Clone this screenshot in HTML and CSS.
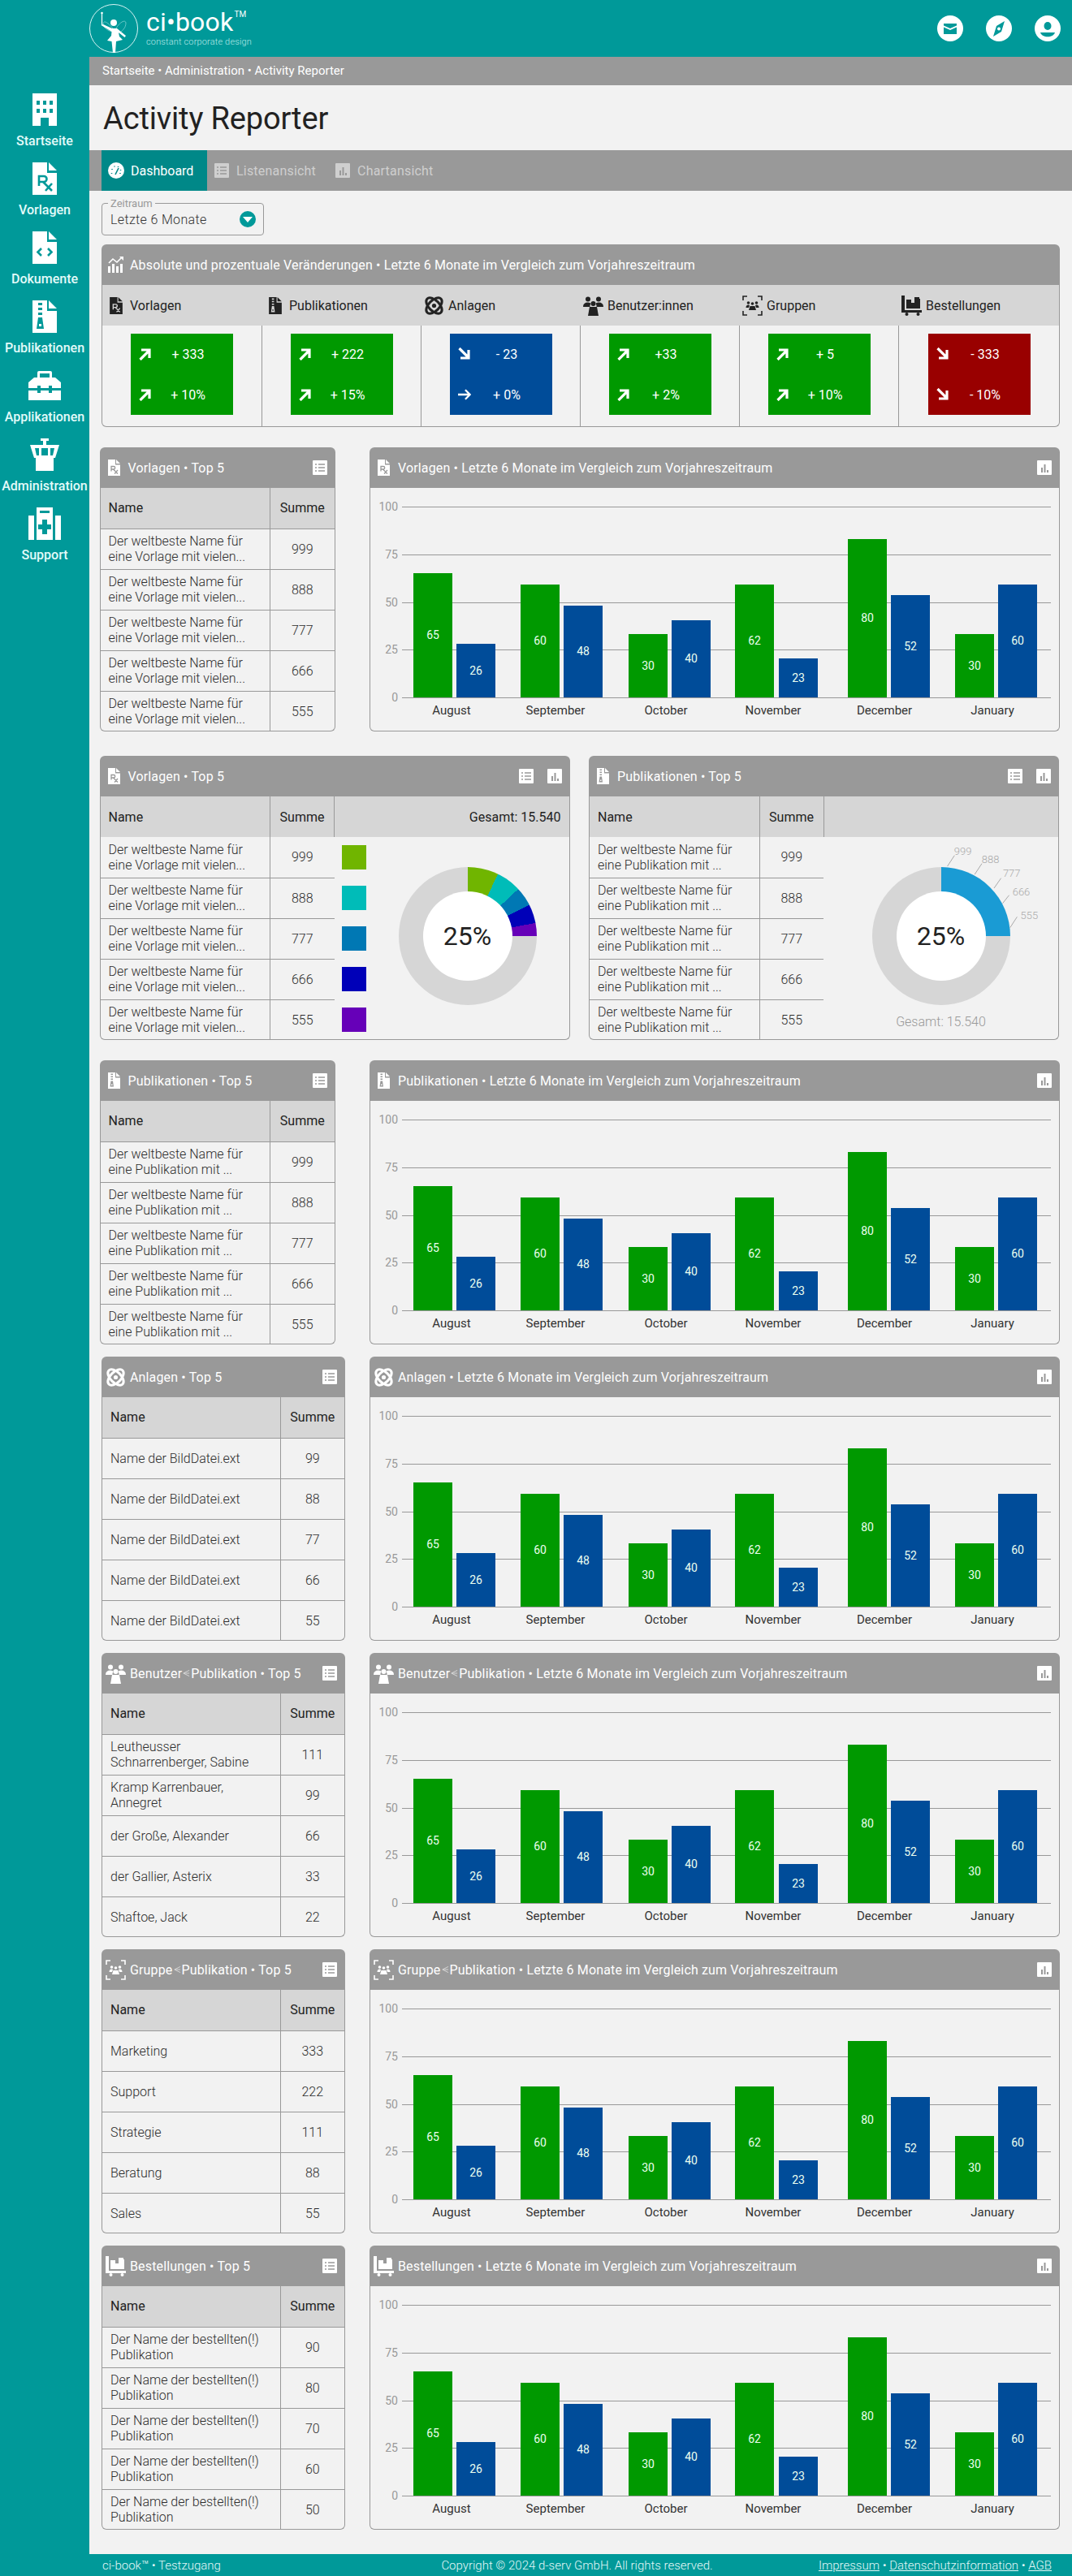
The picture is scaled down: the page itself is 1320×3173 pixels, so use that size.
FILE: index.html
```html
<!DOCTYPE html>
<html lang="de">
<head>
<meta charset="utf-8">
<title>Activity Reporter</title>
<link rel="stylesheet" href="styles.css">
</head>
<body>
<svg class="sprite" aria-hidden="true">
<symbol id="i-building" viewBox="0 0 30 40"><path fill-rule="evenodd" d="M0 0H30V40H20V30H10V40H0ZM5 9V14H9V9ZM13 9V14H17V9ZM21 9V14H25V9ZM5 19V24H9V19ZM13 19V24H17V19ZM21 19V24H25V19Z"/></symbol>
<symbol id="i-rx" viewBox="0 0 30 40"><path d="M0 0H18V13H30V40H0ZM20 0L30 10H20Z"/><path class="hs" stroke-width="2.6" d="M8 29V17H14A3.4 3.4 0 0 1 14 24H8M13 24L24 35M24 26L16 35"/></symbol>
<symbol id="i-code" viewBox="0 0 30 40"><path d="M0 0H18V13H30V40H0ZM20 0L30 10H20Z"/><path class="hs" stroke-width="2.6" d="M11 21L6.5 25.5L11 30M19 21L23.5 25.5L19 30"/></symbol>
<symbol id="i-zip" viewBox="0 0 30 40"><path d="M0 0H18V13H30V40H0ZM20 0L30 10H20Z"/><path class="hf" d="M7 3H12V6H7ZM7 9H12V12H7ZM7 15H12V18H7ZM7 21H12L14 35H5ZM8 29V32H11V29Z"/></symbol>
<symbol id="i-toolbox" viewBox="0 0 40 36"><path fill-rule="evenodd" d="M11 8V2Q11 0 13 0H27Q29 0 29 2V8H33L40 14V21H29V18H25V21H15V18H11V21H0V14L7 8ZM14 3V8H26V3ZM0 24H11V27H15V24H25V27H29V24H40V36H0Z"/></symbol>
<symbol id="i-tower" viewBox="0 0 36 40"><path fill-rule="evenodd" d="M13 0H23V3H20V8H36L31 24H29V40H7V24H5L0 8H16V3H13ZM6 12L8 21H11V12ZM14 12V21H22V12ZM25 12V21H28L30 12Z"/></symbol>
<symbol id="i-support" viewBox="0 0 40 40"><path fill-rule="evenodd" d="M0 10H7V40H0ZM33 10H40V40H33ZM10 0H30V40H10ZM14 4V7H26V4ZM17 15V21H12V27H17V33H23V27H28V21H23V15Z"/></symbol>
<symbol id="i-list" viewBox="0 0 18 18"><rect width="18" height="18" rx="1"/><path class="hs" stroke-width="1.6" d="M3 5H5M7 5H15M3 9H5M7 9H15M3 13H5M7 13H15"/></symbol>
<symbol id="i-bars" viewBox="0 0 18 18"><rect width="18" height="18" rx="1"/><path class="hf" d="M5 9H7V15H5ZM8.5 5H10.5V15H8.5ZM12 12H14V15H12Z"/></symbol>
<symbol id="i-trend" viewBox="0 0 20 20"><path d="M0 12H3V20H0ZM5 9H8V20H5ZM10 12H13V20H10ZM15 9H18V20H15Z"/><path fill="none" stroke="currentColor" stroke-width="1.6" d="M1 8L6 3L11 7L17 1"/><path d="M14 0H19V5Z"/></symbol>
<symbol id="i-atom" viewBox="0 0 25 25"><g fill="none" stroke="currentColor" stroke-width="3"><ellipse cx="12.5" cy="12.5" rx="12" ry="6.5" transform="rotate(45 12.5 12.5)"/><ellipse cx="12.5" cy="12.5" rx="12" ry="6.5" transform="rotate(-45 12.5 12.5)"/></g><circle cx="12.5" cy="12.5" r="2.6"/></symbol>
<symbol id="i-users" viewBox="0 0 25 25"><circle cx="6" cy="4.5" r="3"/><circle cx="19" cy="4.5" r="3"/><path d="M0 14Q0 8.500 6 8.500Q9 8.500 9.500 10Q8 12 8.500 14ZM25 14Q25 8.500 19 8.500Q16 8.500 15.500 10Q17 12 16.500 14Z"/><circle cx="12.500" cy="10" r="3"/><path d="M8 14H17L19 25H6Z"/></symbol>
<symbol id="i-group" viewBox="0 0 25 25"><path fill="none" stroke="currentColor" stroke-width="1.6" d="M6 1H1V6M19 1H24V6M6 24H1V19M19 24H24V19"/><circle cx="7.500" cy="9" r="1.800"/><circle cx="17.500" cy="9" r="1.800"/><circle cx="12.500" cy="10" r="1.800"/><path d="M4.500 15Q4.500 11.500 7.500 11.500L9 12L8 15ZM20.500 15Q20.500 11.500 17.500 11.500L16 12L17 15ZM9.500 13H15.500L17 18H8Z"/></symbol>
<symbol id="i-dolly" viewBox="0 0 25 25"><path d="M0 0H4V18H25V21H0Z"/><circle cx="6.500" cy="23" r="2"/><circle cx="20.500" cy="23" r="2"/><path d="M6 5H12V9H16V2H22V4H23V16H6Z"/></symbol>
<symbol id="i-up" viewBox="0 0 16 16"><path fill="none" stroke="currentColor" stroke-width="3.200" d="M1.500 15L12.500 4M3 3H13V13"/></symbol>
<symbol id="i-down" viewBox="0 0 16 16"><path fill="none" stroke="currentColor" stroke-width="3.200" d="M1.500 1L12.500 12M3 13H13V3"/></symbol>
<symbol id="i-right" viewBox="0 0 18 16"><path fill="none" stroke="currentColor" stroke-width="2.600" d="M0 8H16M10 1.500L16.500 8L10 14.500"/></symbol>
<symbol id="bars" viewBox="0 0 848 299"><g class="grid"><path d="M39 23.500H838M39 82.500H838M39 141.500H838M39 199.500H838M39 258.500H838"/></g><g class="bar-g"><rect x="53" y="105" width="48" height="153"/><rect x="185" y="119" width="48" height="139"/><rect x="318" y="180" width="48" height="78"/><rect x="449" y="119" width="48" height="139"/><rect x="588" y="63" width="48" height="195"/><rect x="720" y="180" width="48" height="78"/></g><g class="bar-b"><rect x="106" y="192" width="48" height="66"/><rect x="238" y="145" width="48" height="113"/><rect x="371" y="163" width="48" height="95"/><rect x="503" y="210" width="48" height="48"/><rect x="641" y="132" width="48" height="126"/><rect x="773" y="119" width="48" height="139"/></g></symbol>
</svg>

<div class="page">
<aside class="side">
<a class="nav"><svg class="ni ni30"><use href="#i-building"/></svg><span>Startseite</span></a>
<a class="nav"><svg class="ni ni30"><use href="#i-rx"/></svg><span>Vorlagen</span></a>
<a class="nav"><svg class="ni ni30"><use href="#i-code"/></svg><span>Dokumente</span></a>
<a class="nav"><svg class="ni ni30"><use href="#i-zip"/></svg><span>Publikationen</span></a>
<a class="nav"><svg class="ni ni40"><use href="#i-toolbox"/></svg><span>Applikationen</span></a>
<a class="nav"><svg class="ni ni36"><use href="#i-tower"/></svg><span>Administration</span></a>
<a class="nav"><svg class="ni ni40"><use href="#i-support"/></svg><span>Support</span></a>
</aside>

<div class="main">
<header class="top">
<div class="logo">
<svg class="fairy" viewBox="0 0 60 60"><circle cx="30" cy="30" r="29.500" class="fairy-ring"/><path class="fairy-wing" d="M29 30C24 24 18 19 17 24C17 29 23 33 28 34M33 30C36 24 44 18 45 23C45 30 40 34 35 36"/><path class="fairy-wand" d="M15.500 11V26"/><circle cx="15.500" cy="11" r="1.300" fill="#fff"/><circle cx="30" cy="23" r="4" fill="#fff"/><path fill="#fff" d="M14.500 26L17 25L28 30H34L45 39L43.500 41L36 35L37 40L41 44L33 46L32 60H29L27.500 46L22 45L27 39L27.500 34Z"/></svg>
<div class="brand"><div class="brand-name">ci•book<sup>TM</sup></div><div class="brand-tag">constant corporate design</div></div>
</div>
<div class="top-icons">
<svg class="round" viewBox="0 0 32 32"><circle cx="16" cy="16" r="16" fill="#fff"/><path fill="#009999" d="M8 10H24V12.500L16 16L8 12.500ZM8 14.500L16 18L24 14.500V23H8Z"/></svg>
<svg class="round" viewBox="0 0 32 32"><circle cx="16" cy="16" r="16" fill="#fff"/><path fill="#009999" fill-rule="evenodd" d="M23 7L19 20L9 26L13 13ZM16 14.500A2 2 0 1 0 16.010 14.500Z"/></svg>
<svg class="round" viewBox="0 0 32 32"><circle cx="16" cy="16" r="16" fill="#fff"/><ellipse cx="16" cy="13" rx="4.500" ry="5" fill="#009999"/><path fill="#009999" d="M7 21H25C23 28 9 28 7 21Z"/></svg>
</div>
</header>

<nav class="crumbs">Startseite • Administration • Activity Reporter</nav>
<h1 class="title">Activity Reporter</h1>

<div class="tabs">
<a class="tab tab-on"><svg class="tab-gauge" viewBox="0 0 20 20"><circle cx="10" cy="10" r="10" fill="#fff"/><path class="gauge" d="M5 8V9M8 4.500V5.500M12.500 5V6M15.500 9V10M4.500 13V14M15 13V14M9 15L13 7"/></svg>Dashboard</a>
<a class="tab tab-off"><svg class="tab-ico"><use href="#i-list"/></svg>Listenansicht</a>
<a class="tab tab-off"><svg class="tab-ico"><use href="#i-bars"/></svg>Chartansicht</a>
</div>

<div class="content">
<fieldset class="range"><legend>Zeitraum</legend><div class="range-row"><span>Letzte 6 Monate</span><span class="caret"></span></div></fieldset>

<section class="card stats">
<div class="head"><span class="hi"><svg class="w20"><use href="#i-trend"/></svg></span>Absolute und prozentuale Veränderungen • Letzte 6 Monate im Vergleich zum Vorjahreszeitraum</div>
<div class="stat-grid">
<div class="stat-h"><span class="hi"><svg class="w16"><use href="#i-rx"/></svg></span>Vorlagen</div>
<div class="stat-h"><span class="hi"><svg class="w16"><use href="#i-zip"/></svg></span>Publikationen</div>
<div class="stat-h"><span class="hi"><svg class="w25"><use href="#i-atom"/></svg></span>Anlagen</div>
<div class="stat-h"><span class="hi"><svg class="w25"><use href="#i-users"/></svg></span>Benutzer:innen</div>
<div class="stat-h"><span class="hi"><svg class="w25"><use href="#i-group"/></svg></span>Gruppen</div>
<div class="stat-h"><span class="hi"><svg class="w25"><use href="#i-dolly"/></svg></span>Bestellungen</div>
<div class="stat-c"><div class="box up"><div class="ln"><svg class="ar"><use href="#i-up"/></svg><b>+ 333</b></div><div class="ln"><svg class="ar"><use href="#i-up"/></svg><b>+ 10%</b></div></div></div>
<div class="stat-c"><div class="box up"><div class="ln"><svg class="ar"><use href="#i-up"/></svg><b>+ 222</b></div><div class="ln"><svg class="ar"><use href="#i-up"/></svg><b>+ 15%</b></div></div></div>
<div class="stat-c"><div class="box flat"><div class="ln"><svg class="ar"><use href="#i-down"/></svg><b>- 23</b></div><div class="ln"><svg class="ar"><use href="#i-right"/></svg><b>+ 0%</b></div></div></div>
<div class="stat-c"><div class="box up"><div class="ln"><svg class="ar"><use href="#i-up"/></svg><b>+33</b></div><div class="ln"><svg class="ar"><use href="#i-up"/></svg><b>+ 2%</b></div></div></div>
<div class="stat-c"><div class="box up"><div class="ln"><svg class="ar"><use href="#i-up"/></svg><b>+ 5</b></div><div class="ln"><svg class="ar"><use href="#i-up"/></svg><b>+ 10%</b></div></div></div>
<div class="stat-c"><div class="box bad"><div class="ln"><svg class="ar"><use href="#i-down"/></svg><b>- 333</b></div><div class="ln"><svg class="ar"><use href="#i-down"/></svg><b>- 10%</b></div></div></div>
</div>
</section>

<div class="row narrow mt25">
<section class="card top5 t-n"><div class="head"><span class="hi"><svg class="w15"><use href="#i-rx"/></svg></span>Vorlagen • Top 5<span class="btns"><svg class="btn"><use href="#i-list"/></svg></span></div>
<div class="body"><table class="tbl"><thead><tr><th>Name</th><th class="sum">Summe</th></tr></thead><tbody>
<tr><td>Der weltbeste Name für<br>eine Vorlage mit vielen...</td><td class="sum">999</td></tr>
<tr><td>Der weltbeste Name für<br>eine Vorlage mit vielen...</td><td class="sum">888</td></tr>
<tr><td>Der weltbeste Name für<br>eine Vorlage mit vielen...</td><td class="sum">777</td></tr>
<tr><td>Der weltbeste Name für<br>eine Vorlage mit vielen...</td><td class="sum">666</td></tr>
<tr><td>Der weltbeste Name für<br>eine Vorlage mit vielen...</td><td class="sum">555</td></tr>
</tbody></table></div></section>
<section class="card chart"><div class="head"><span class="hi"><svg class="w15"><use href="#i-rx"/></svg></span>Vorlagen • Letzte 6 Monate im Vergleich zum Vorjahreszeitraum<span class="btns"><svg class="btn"><use href="#i-bars"/></svg></span></div>
<div class="body"><svg class="plot" viewBox="0 0 848 299"><use href="#bars"/><g class="yl"><text x="34" y="23">100</text><text x="34" y="82">75</text><text x="34" y="141">50</text><text x="34" y="199">25</text><text x="34" y="258">0</text></g><g class="vl"><text x="77" y="181">65</text><text x="130" y="225">26</text><text x="209" y="188">60</text><text x="262" y="201">48</text><text x="342" y="219">30</text><text x="395" y="210">40</text><text x="473" y="188">62</text><text x="527" y="234">23</text><text x="612" y="160">80</text><text x="665" y="195">52</text><text x="744" y="219">30</text><text x="797" y="188">60</text></g><g class="ml"><text x="100" y="274">August</text><text x="228" y="274">September</text><text x="364" y="274">October</text><text x="496" y="274">November</text><text x="633" y="274">December</text><text x="766" y="274">January</text></g></svg></div></section>
</div>

<div class="row duo mt30">
<section class="card top5 t-d"><div class="head"><span class="hi"><svg class="w15"><use href="#i-rx"/></svg></span>Vorlagen • Top 5<span class="btns"><svg class="btn"><use href="#i-list"/></svg><svg class="btn"><use href="#i-bars"/></svg></span></div>
<div class="body"><table class="tbl tbl-d"><thead><tr><th>Name</th><th class="sum">Summe</th><th class="tot">Gesamt: 15.540</th></tr></thead><tbody>
<tr><td>Der weltbeste Name für<br>eine Vorlage mit vielen...</td><td class="sum">999</td>
<td rowspan="5" class="vis"><div class="vis-in"><div class="swatches"><i class="sw s1"></i><i class="sw s2"></i><i class="sw s3"></i><i class="sw s4"></i><i class="sw s5"></i></div><div class="donut multi"><div class="hole">25%</div></div></div></td></tr>
<tr><td>Der weltbeste Name für<br>eine Vorlage mit vielen...</td><td class="sum">888</td></tr>
<tr><td>Der weltbeste Name für<br>eine Vorlage mit vielen...</td><td class="sum">777</td></tr>
<tr><td>Der weltbeste Name für<br>eine Vorlage mit vielen...</td><td class="sum">666</td></tr>
<tr><td>Der weltbeste Name für<br>eine Vorlage mit vielen...</td><td class="sum">555</td></tr>
</tbody></table></div></section>
<section class="card top5 t-d"><div class="head"><span class="hi"><svg class="w15"><use href="#i-zip"/></svg></span>Publikationen • Top 5<span class="btns"><svg class="btn"><use href="#i-list"/></svg><svg class="btn"><use href="#i-bars"/></svg></span></div>
<div class="body"><table class="tbl tbl-d"><thead><tr><th>Name</th><th class="sum">Summe</th><th class="tot"></th></tr></thead><tbody>
<tr><td>Der weltbeste Name für<br>eine Publikation mit ...</td><td class="sum">999</td>
<td rowspan="5" class="vis"><div class="vis-in center"><svg class="leaders" viewBox="0 0 289 250"><path d="M152.600 36L161.300 22.700M186.200 46L195 32.700M210 63L218.600 50.700M220.600 81.700L228.500 71.700M229.700 111.700L238.400 98.300"/><text x="171.600" y="17">999</text><text x="205.600" y="27">888</text><text x="231.700" y="44">777</text><text x="243.500" y="67">666</text><text x="253.400" y="96">555</text></svg><div class="donut single"><div class="hole">25%</div></div><div class="donut-total">Gesamt: 15.540</div></div></td></tr>
<tr><td>Der weltbeste Name für<br>eine Publikation mit ...</td><td class="sum">888</td></tr>
<tr><td>Der weltbeste Name für<br>eine Publikation mit ...</td><td class="sum">777</td></tr>
<tr><td>Der weltbeste Name für<br>eine Publikation mit ...</td><td class="sum">666</td></tr>
<tr><td>Der weltbeste Name für<br>eine Publikation mit ...</td><td class="sum">555</td></tr>
</tbody></table></div></section>
</div>

<div class="row narrow mt25">
<section class="card top5 t-n"><div class="head"><span class="hi"><svg class="w15"><use href="#i-zip"/></svg></span>Publikationen • Top 5<span class="btns"><svg class="btn"><use href="#i-list"/></svg></span></div>
<div class="body"><table class="tbl"><thead><tr><th>Name</th><th class="sum">Summe</th></tr></thead><tbody>
<tr><td>Der weltbeste Name für<br>eine Publikation mit ...</td><td class="sum">999</td></tr>
<tr><td>Der weltbeste Name für<br>eine Publikation mit ...</td><td class="sum">888</td></tr>
<tr><td>Der weltbeste Name für<br>eine Publikation mit ...</td><td class="sum">777</td></tr>
<tr><td>Der weltbeste Name für<br>eine Publikation mit ...</td><td class="sum">666</td></tr>
<tr><td>Der weltbeste Name für<br>eine Publikation mit ...</td><td class="sum">555</td></tr>
</tbody></table></div></section>
<section class="card chart"><div class="head"><span class="hi"><svg class="w15"><use href="#i-zip"/></svg></span>Publikationen • Letzte 6 Monate im Vergleich zum Vorjahreszeitraum<span class="btns"><svg class="btn"><use href="#i-bars"/></svg></span></div>
<div class="body"><svg class="plot" viewBox="0 0 848 299"><use href="#bars"/><g class="yl"><text x="34" y="23">100</text><text x="34" y="82">75</text><text x="34" y="141">50</text><text x="34" y="199">25</text><text x="34" y="258">0</text></g><g class="vl"><text x="77" y="181">65</text><text x="130" y="225">26</text><text x="209" y="188">60</text><text x="262" y="201">48</text><text x="342" y="219">30</text><text x="395" y="210">40</text><text x="473" y="188">62</text><text x="527" y="234">23</text><text x="612" y="160">80</text><text x="665" y="195">52</text><text x="744" y="219">30</text><text x="797" y="188">60</text></g><g class="ml"><text x="100" y="274">August</text><text x="228" y="274">September</text><text x="364" y="274">October</text><text x="496" y="274">November</text><text x="633" y="274">December</text><text x="766" y="274">January</text></g></svg></div></section>
</div>

<div class="row mt15">
<section class="card top5 t-w"><div class="head"><span class="hi"><svg class="w25"><use href="#i-atom"/></svg></span>Anlagen • Top 5<span class="btns"><svg class="btn"><use href="#i-list"/></svg></span></div>
<div class="body"><table class="tbl"><thead><tr><th>Name</th><th class="sum">Summe</th></tr></thead><tbody>
<tr><td>Name der BildDatei.ext</td><td class="sum">99</td></tr>
<tr><td>Name der BildDatei.ext</td><td class="sum">88</td></tr>
<tr><td>Name der BildDatei.ext</td><td class="sum">77</td></tr>
<tr><td>Name der BildDatei.ext</td><td class="sum">66</td></tr>
<tr><td>Name der BildDatei.ext</td><td class="sum">55</td></tr>
</tbody></table></div></section>
<section class="card chart"><div class="head"><span class="hi"><svg class="w25"><use href="#i-atom"/></svg></span>Anlagen • Letzte 6 Monate im Vergleich zum Vorjahreszeitraum<span class="btns"><svg class="btn"><use href="#i-bars"/></svg></span></div>
<div class="body"><svg class="plot" viewBox="0 0 848 299"><use href="#bars"/><g class="yl"><text x="34" y="23">100</text><text x="34" y="82">75</text><text x="34" y="141">50</text><text x="34" y="199">25</text><text x="34" y="258">0</text></g><g class="vl"><text x="77" y="181">65</text><text x="130" y="225">26</text><text x="209" y="188">60</text><text x="262" y="201">48</text><text x="342" y="219">30</text><text x="395" y="210">40</text><text x="473" y="188">62</text><text x="527" y="234">23</text><text x="612" y="160">80</text><text x="665" y="195">52</text><text x="744" y="219">30</text><text x="797" y="188">60</text></g><g class="ml"><text x="100" y="274">August</text><text x="228" y="274">September</text><text x="364" y="274">October</text><text x="496" y="274">November</text><text x="633" y="274">December</text><text x="766" y="274">January</text></g></svg></div></section>
</div>

<div class="row mt15">
<section class="card top5 t-w"><div class="head"><span class="hi"><svg class="w25"><use href="#i-users"/></svg></span>Benutzer<svg class="fan" viewBox="0 0 10 12"><path d="M1 6L9 2M1 6H9M1 6L9 10"/></svg>Publikation • Top 5<span class="btns"><svg class="btn"><use href="#i-list"/></svg></span></div>
<div class="body"><table class="tbl"><thead><tr><th>Name</th><th class="sum">Summe</th></tr></thead><tbody>
<tr><td>Leutheusser<br>Schnarrenberger, Sabine</td><td class="sum">111</td></tr>
<tr><td>Kramp Karrenbauer,<br>Annegret</td><td class="sum">99</td></tr>
<tr><td>der Große, Alexander</td><td class="sum">66</td></tr>
<tr><td>der Gallier, Asterix</td><td class="sum">33</td></tr>
<tr><td>Shaftoe, Jack</td><td class="sum">22</td></tr>
</tbody></table></div></section>
<section class="card chart"><div class="head"><span class="hi"><svg class="w25"><use href="#i-users"/></svg></span>Benutzer<svg class="fan" viewBox="0 0 10 12"><path d="M1 6L9 2M1 6H9M1 6L9 10"/></svg>Publikation • Letzte 6 Monate im Vergleich zum Vorjahreszeitraum<span class="btns"><svg class="btn"><use href="#i-bars"/></svg></span></div>
<div class="body"><svg class="plot" viewBox="0 0 848 299"><use href="#bars"/><g class="yl"><text x="34" y="23">100</text><text x="34" y="82">75</text><text x="34" y="141">50</text><text x="34" y="199">25</text><text x="34" y="258">0</text></g><g class="vl"><text x="77" y="181">65</text><text x="130" y="225">26</text><text x="209" y="188">60</text><text x="262" y="201">48</text><text x="342" y="219">30</text><text x="395" y="210">40</text><text x="473" y="188">62</text><text x="527" y="234">23</text><text x="612" y="160">80</text><text x="665" y="195">52</text><text x="744" y="219">30</text><text x="797" y="188">60</text></g><g class="ml"><text x="100" y="274">August</text><text x="228" y="274">September</text><text x="364" y="274">October</text><text x="496" y="274">November</text><text x="633" y="274">December</text><text x="766" y="274">January</text></g></svg></div></section>
</div>

<div class="row mt15">
<section class="card top5 t-w"><div class="head"><span class="hi"><svg class="w25"><use href="#i-group"/></svg></span>Gruppe<svg class="fan" viewBox="0 0 10 12"><path d="M1 6L9 2M1 6H9M1 6L9 10"/></svg>Publikation • Top 5<span class="btns"><svg class="btn"><use href="#i-list"/></svg></span></div>
<div class="body"><table class="tbl"><thead><tr><th>Name</th><th class="sum">Summe</th></tr></thead><tbody>
<tr><td>Marketing</td><td class="sum">333</td></tr>
<tr><td>Support</td><td class="sum">222</td></tr>
<tr><td>Strategie</td><td class="sum">111</td></tr>
<tr><td>Beratung</td><td class="sum">88</td></tr>
<tr><td>Sales</td><td class="sum">55</td></tr>
</tbody></table></div></section>
<section class="card chart"><div class="head"><span class="hi"><svg class="w25"><use href="#i-group"/></svg></span>Gruppe<svg class="fan" viewBox="0 0 10 12"><path d="M1 6L9 2M1 6H9M1 6L9 10"/></svg>Publikation • Letzte 6 Monate im Vergleich zum Vorjahreszeitraum<span class="btns"><svg class="btn"><use href="#i-bars"/></svg></span></div>
<div class="body"><svg class="plot" viewBox="0 0 848 299"><use href="#bars"/><g class="yl"><text x="34" y="23">100</text><text x="34" y="82">75</text><text x="34" y="141">50</text><text x="34" y="199">25</text><text x="34" y="258">0</text></g><g class="vl"><text x="77" y="181">65</text><text x="130" y="225">26</text><text x="209" y="188">60</text><text x="262" y="201">48</text><text x="342" y="219">30</text><text x="395" y="210">40</text><text x="473" y="188">62</text><text x="527" y="234">23</text><text x="612" y="160">80</text><text x="665" y="195">52</text><text x="744" y="219">30</text><text x="797" y="188">60</text></g><g class="ml"><text x="100" y="274">August</text><text x="228" y="274">September</text><text x="364" y="274">October</text><text x="496" y="274">November</text><text x="633" y="274">December</text><text x="766" y="274">January</text></g></svg></div></section>
</div>

<div class="row mt15">
<section class="card top5 t-w"><div class="head"><span class="hi"><svg class="w25"><use href="#i-dolly"/></svg></span>Bestellungen • Top 5<span class="btns"><svg class="btn"><use href="#i-list"/></svg></span></div>
<div class="body"><table class="tbl"><thead><tr><th>Name</th><th class="sum">Summe</th></tr></thead><tbody>
<tr><td>Der Name der bestellten(!)<br>Publikation</td><td class="sum">90</td></tr>
<tr><td>Der Name der bestellten(!)<br>Publikation</td><td class="sum">80</td></tr>
<tr><td>Der Name der bestellten(!)<br>Publikation</td><td class="sum">70</td></tr>
<tr><td>Der Name der bestellten(!)<br>Publikation</td><td class="sum">60</td></tr>
<tr><td>Der Name der bestellten(!)<br>Publikation</td><td class="sum">50</td></tr>
</tbody></table></div></section>
<section class="card chart"><div class="head"><span class="hi"><svg class="w25"><use href="#i-dolly"/></svg></span>Bestellungen • Letzte 6 Monate im Vergleich zum Vorjahreszeitraum<span class="btns"><svg class="btn"><use href="#i-bars"/></svg></span></div>
<div class="body"><svg class="plot" viewBox="0 0 848 299"><use href="#bars"/><g class="yl"><text x="34" y="23">100</text><text x="34" y="82">75</text><text x="34" y="141">50</text><text x="34" y="199">25</text><text x="34" y="258">0</text></g><g class="vl"><text x="77" y="181">65</text><text x="130" y="225">26</text><text x="209" y="188">60</text><text x="262" y="201">48</text><text x="342" y="219">30</text><text x="395" y="210">40</text><text x="473" y="188">62</text><text x="527" y="234">23</text><text x="612" y="160">80</text><text x="665" y="195">52</text><text x="744" y="219">30</text><text x="797" y="188">60</text></g><g class="ml"><text x="100" y="274">August</text><text x="228" y="274">September</text><text x="364" y="274">October</text><text x="496" y="274">November</text><text x="633" y="274">December</text><text x="766" y="274">January</text></g></svg></div></section>
</div>
</div>

<footer class="foot">
<div>ci-book™ • Testzugang</div>
<div>Copyright © 2024 d-serv GmbH. All rights reserved.</div>
<div class="foot-r"><a>Impressum</a> • <a>Datenschutzinformation</a> • <a>AGB</a></div>
</footer>
</div>
</div>
</body>
</html>
```

FILE: styles.css
```css
* { box-sizing: border-box; }
html, body { margin: 0; padding: 0; }
body { font-family: Roboto, "Liberation Sans", sans-serif; font-size: 16px; color: #333; background: #f2f2f2; }
.sprite { position: absolute; width: 0; height: 0; }
.hs { fill: none; stroke: var(--hole); }
.hf { fill: var(--hole); }
svg { fill: currentColor; }

.page { display: flex; min-height: 3173px; }
.side { width: 110px; flex: none; background: #009999; padding-top: 115px; display: flex; flex-direction: column; --hole: #009999; color: #fff; }
.nav { height: 85px; display: flex; flex-direction: column; align-items: center; }
.nav span { margin-top: 8px; line-height: 22px; font-size: 16px; font-weight: 500; color: #e3fbf9; white-space: nowrap; }
.ni { height: 40px; flex: none; }
.ni30 { width: 30px; }
.ni36 { width: 36px; }
.ni40 { width: 40px; }

.main { flex: 1; min-width: 0; display: flex; flex-direction: column; }
.top { height: 70px; background: #009999; display: flex; justify-content: space-between; align-items: center; padding-right: 14px; }
.logo { display: flex; align-items: center; gap: 10px; }
.fairy { width: 60px; height: 60px; }
.fairy-ring { fill: none; stroke: #d8f4f4; stroke-width: 1; }
.fairy-wing { fill: none; stroke: #7fd0d0; stroke-width: .8; }
.fairy-wand { fill: none; stroke: #fff; stroke-width: 1.2; }
.brand { color: #fff; margin-top: -3px; }
.brand-name { font-size: 32px; line-height: 36px; letter-spacing: .2px; }
.brand-name sup { font-size: 10px; vertical-align: 17px; line-height: 0; margin-left: 1px; }
.brand-tag { font-size: 11px; line-height: 14px; color: #b8e8e8; font-weight: 300; letter-spacing: .15px; }
.top-icons { display: flex; gap: 28px; }
.round { width: 32px; height: 32px; display: block; }

.crumbs { height: 35px; background: #999; color: #fff; font-size: 15px; line-height: 35px; padding-left: 16px; }
.title { margin: 0; height: 80px; padding: 19px 0 0 17px; font-size: 38px; line-height: 44px; font-weight: 400; color: #222; letter-spacing: -.15px; }

.tabs { height: 50px; background: #999; display: flex; padding-left: 15px; }
.tab { display: flex; align-items: center; font-size: 16px; }
.tab-on { width: 130px; background: #008888; color: #fff; padding-left: 8px; gap: 8px; }
.tab-off { color: #cfcfcf; --hole: #999; padding-left: 9px; gap: 9px; margin-right: 15px; letter-spacing: .2px; }
.tab-gauge { width: 20px; height: 20px; }
.gauge { fill: none; stroke: #008888; stroke-width: 1.6; }
.tab-ico { width: 18px; height: 18px; }

.content { padding: 8px 15px 30px; }
.range { margin: 0; padding: 0 10px 7px; width: 200px; border: 1px solid #999; border-radius: 4px; min-width: 0; }
.range legend { padding: 0 3px; margin-left: -3px; font-size: 13px; line-height: 15px; color: #999; }
.range-row { height: 24px; display: flex; justify-content: space-between; align-items: center; color: #333; font-weight: 300; letter-spacing: .35px; margin-right: -1px; }
.caret { width: 20px; height: 20px; border-radius: 50%; background: #009999; display: flex; align-items: center; justify-content: center; }
.caret::after { content: ""; border: 6px solid transparent; border-top: 7px solid #fff; border-bottom: 0; }

.card { height: 350px; display: flex; flex-direction: column; }
.head { height: 50px; flex: none; background: #999; color: #fff; border-radius: 6px 6px 0 0; display: flex; align-items: center; padding-left: 5px; padding-right: 10px; --hole: #999; white-space: nowrap; letter-spacing: .15px; }
.hi { width: 25px; margin-right: 5px; display: flex; justify-content: center; flex: none; }
.w15 { width: 15px; height: 20px; }
.w16 { width: 16px; height: 21px; }
.w20 { width: 20px; height: 20px; }
.w25 { width: 25px; height: 25px; }
.btns { margin-left: auto; display: flex; gap: 17px; }
.btn { width: 18px; height: 18px; }
.fan { width: 9px; height: 12px; margin: 0 1px; flex: none; }
.fan path { fill: none; stroke: #ddd; stroke-width: 1; }
.body { flex: 1; min-height: 0; border: 1px solid #999; border-top: 0; border-radius: 0 0 6px 6px; overflow: hidden; }

.stats { height: 225px; margin-top: 11px; }
.stat-grid { flex: 1; display: grid; grid-template-columns: repeat(5, 196px) 1fr; grid-template-rows: 50px 1fr; border: 1px solid #999; border-top: 0; border-radius: 0 0 6px 6px; overflow: hidden; margin: 0; }
.stat-h { background: #d6d6d6; display: flex; align-items: center; padding-left: 4px; color: #222; --hole: #d6d6d6; }
.stat-c { display: flex; justify-content: center; padding-top: 10px; border-left: 1px solid #999; }
.stat-c:nth-child(7) { border-left: 0; }
.box { width: 126px; height: 100px; color: #fff; }
.up { background: #009900; }
.flat { background: #004c99; }
.bad { background: #990000; }
.ln { height: 50px; display: flex; align-items: center; padding-left: 10px; }
.ln b { flex: 1; text-align: center; font-weight: 400; padding-right: 11px; }
.ar { width: 16px; height: 16px; flex: none; }

.row { display: flex; justify-content: space-between; }
.narrow { margin-left: -2.5px; }
.duo { margin-left: -2.5px; margin-right: 1px; }
.mt15 { margin-top: 15px; }
.mt25 { margin-top: 25px; }
.mt30 { margin-top: 30px; }
.t-n { width: 290px; }
.t-w { width: 300px; }
.t-d { width: 579px; }
.chart { width: 850px; }
.plot { display: block; width: 848px; height: 299px; }
.grid path { fill: none; stroke: #999; stroke-width: 1; }
.bar-g { fill: #009900; }
.bar-b { fill: #004c99; }
.yl text { font-size: 14px; fill: #999; text-anchor: end; dominant-baseline: central; }
.vl text { font-size: 14px; fill: #ecfff0; text-anchor: middle; dominant-baseline: central; }
.ml text { font-size: 15px; fill: #333; text-anchor: middle; dominant-baseline: central; }

.tbl { width: 100%; height: 100%; border-collapse: collapse; table-layout: fixed; }
.tbl th { height: 50px; background: #d6d6d6; font-weight: 400; color: #222; text-align: left; padding: 0 10px; border-bottom: 1px solid #999; white-space: nowrap; }
.tbl td { height: 50px; padding: 0 10px; font-weight: 300; line-height: 19px; border-top: 1px solid #999; white-space: nowrap; color: #2c2c2c; }
.tbl tbody tr:first-child td { border-top: 0; }
.tbl .sum { width: 79px; text-align: center; padding: 0; border-left: 1px solid #999; }
.tbl th.sum { font-weight: 400; }
.tbl-d th:first-child { width: 209px; }
.tbl-d th { border-bottom: 0; }
.tbl-d .tot { width: 289px; text-align: right; border-left: 1px solid #999; }
.tbl td.vis { padding: 0; border-top: 0; vertical-align: top; }
.vis-in { height: 249px; display: flex; position: relative; padding: 10px 0 0 9px; }
.center { flex-direction: column; align-items: center; padding: 37px 0 0; }
.swatches { display: flex; flex-direction: column; gap: 20px; flex: none; }
.sw { display: block; width: 30px; height: 30px; }
.s1 { background: #70b500; }
.s2 { background: #00bcb8; }
.s3 { background: #0078b4; }
.s4 { background: #0000b8; }
.s5 { background: #6600b8; }
.donut { width: 170px; height: 170px; border-radius: 50%; display: flex; align-items: center; justify-content: center; flex: none; }
.multi { margin: 27px 0 0 40px; background: conic-gradient(#70b500 0 26deg, #00bcb8 26deg 47deg, #0078b4 47deg 63deg, #0000b8 63deg 79deg, #6600b8 79deg 90deg, #d6d6d6 90deg 360deg); }
.single { background: conic-gradient(#1a9bd4 0 90deg, #d6d6d6 90deg 360deg); }
.hole { width: 110px; height: 110px; border-radius: 50%; background: #fff; display: flex; align-items: center; justify-content: center; font-size: 32px; color: #222; font-weight: 400; }
.donut-total { margin-top: 11px; line-height: 20px; color: #999; }
.leaders { position: absolute; left: 0; top: 0; width: 289px; height: 250px; }
.leaders path { fill: none; stroke: #aaa; stroke-width: 1; }
.leaders text { font-size: 13px; fill: #aaa; text-anchor: middle; dominant-baseline: central; }

.foot { height: 28px; background: #009999; color: #e3f7f7; font-size: 15px; line-height: 28px; font-weight: 300; display: grid; grid-template-columns: 1fr auto 1fr; padding: 0 25px 0 16px; }
.foot-r { text-align: right; }
.foot-r a { text-decoration: underline; }
```
